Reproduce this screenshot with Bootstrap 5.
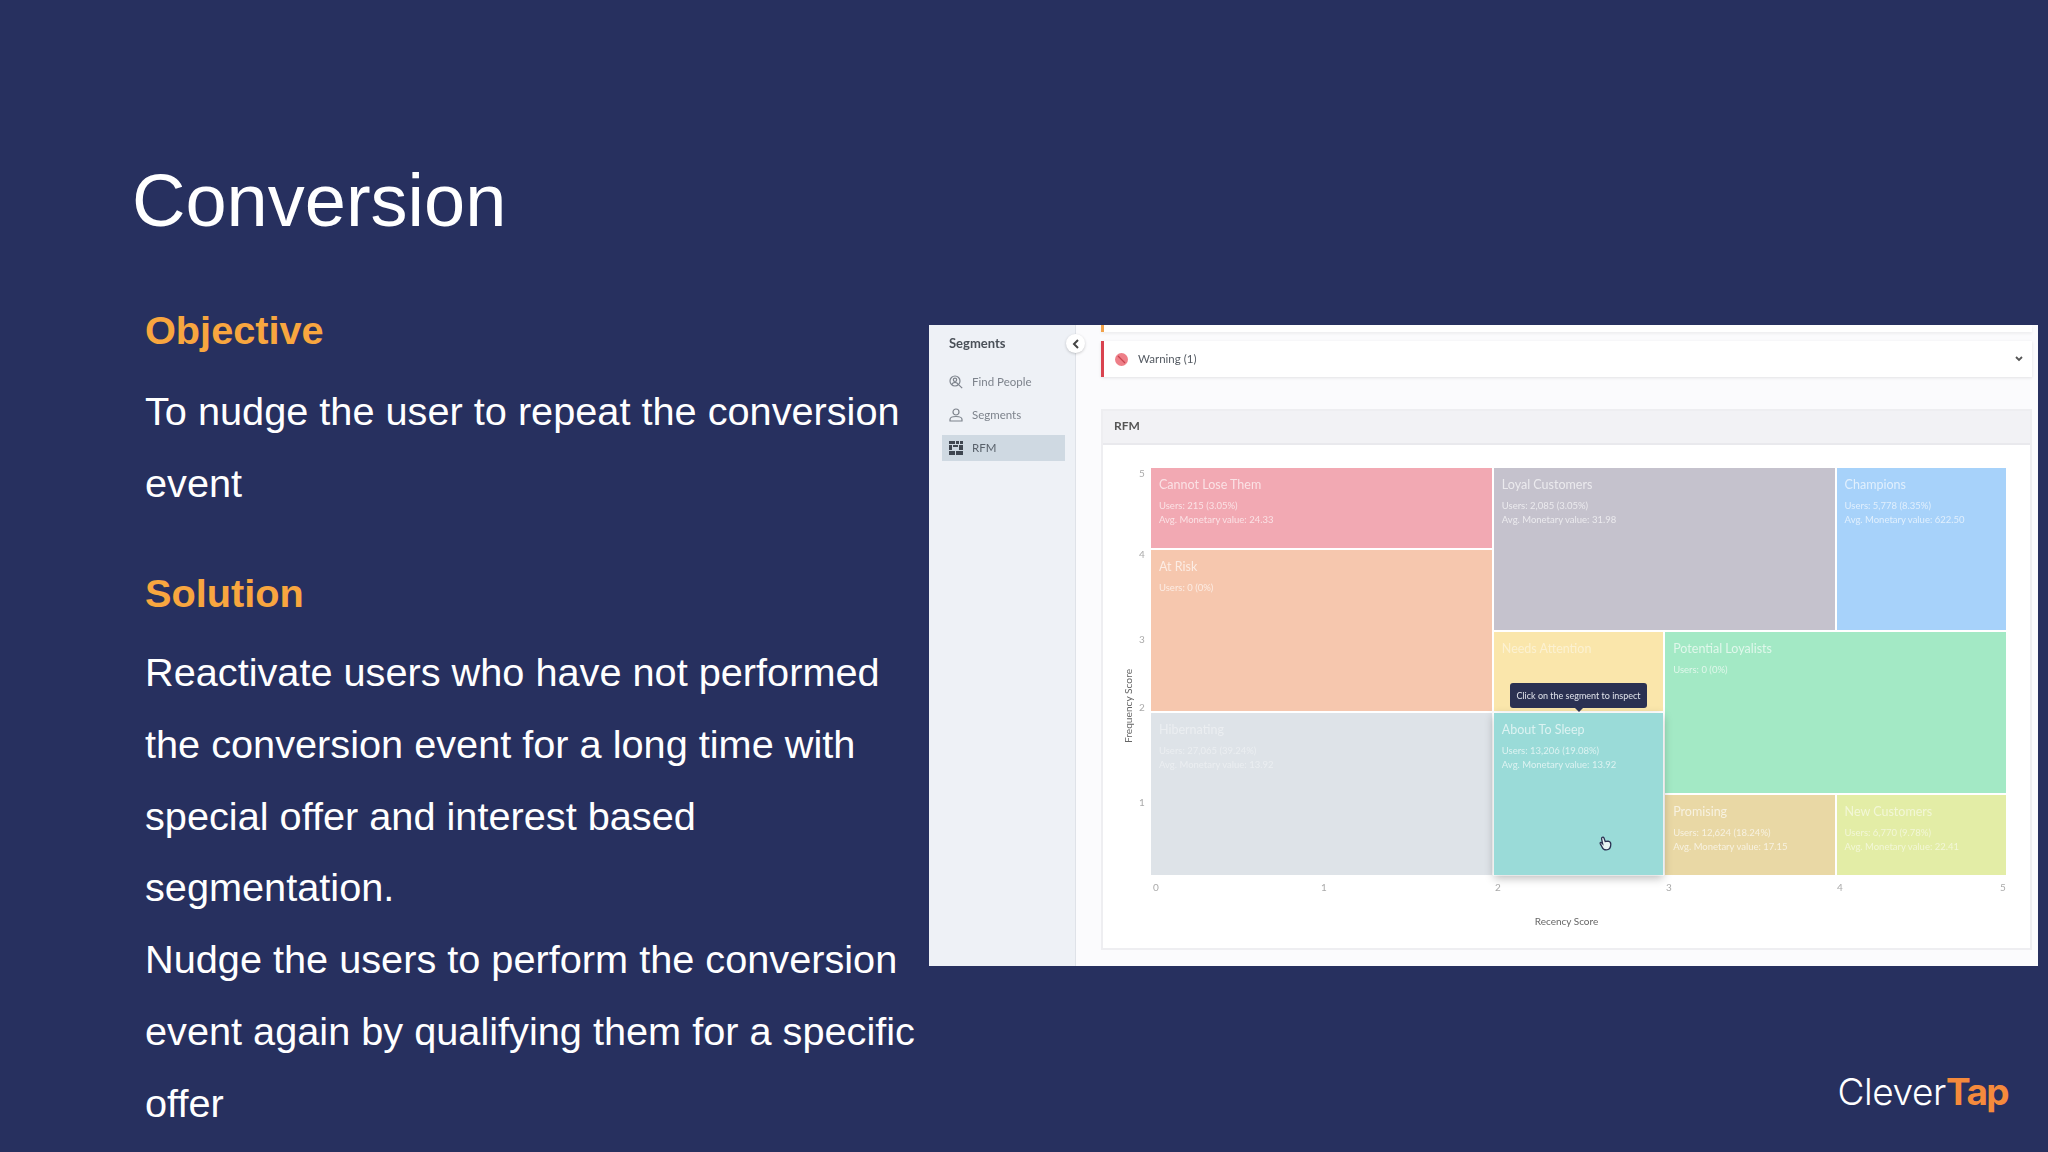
<!DOCTYPE html>
<html lang="en">
<head>
  <meta charset="UTF-8">
  <title>Conversion</title>
  <link href="https://cdn.jsdelivr.net/npm/bootstrap@5.3.0/dist/css/bootstrap.min.css" rel="stylesheet">
  <style>
    body { background-color: #27305f; color: #fff; font-family: "Liberation Sans", Arial, sans-serif; overflow: hidden; }
    .slide { height: 1152px; padding-left: 132px; padding-top: 156px; }
    .slide-title { font-family: "Liberation Sans", Arial, sans-serif; font-size: 74px; font-weight: 400; line-height: 89px; margin: 0 0 60px 0; }
    .copy { width: 797px; padding-left: 13px; flex: none; }
    .copy-head { font-family: "Liberation Sans", Arial, sans-serif; font-size: 39.7px; font-weight: 700; line-height: 50px; color: #f8a63f; margin: 0; }
    .copy-text { font-size: 39.7px; line-height: 71.8px; margin: 0; }
    .head-first { margin-bottom: 21px; }
    .head-second { margin-top: 48.5px; margin-bottom: 19px; }
    .shot-col { width: 1109px; margin-top: 20px; }

    /* the embedded product screenshot */
    .app-shot { height: 641px; background: #fbfbfd; font-family: Lato, "Open Sans", sans-serif; color: #555; filter: blur(.7px); }
    .app-side { width: 147px; flex: none; background: #eef1f6; border-right: 1px solid #dfe2e8; position: relative; padding: 11px 10px 0 13px; }
    .side-title { font-size: 13px; font-weight: 700; color: #4a5058; line-height: 14px; margin: 0 0 19px 7px; }
    .side-link { display: flex; align-items: center; gap: 9px; height: 26px; padding-left: 7px; margin-bottom: 7px; font-size: 11.5px; color: #7d838c; }
    .side-link svg { width: 14px; height: 14px; flex: none; }
    .side-on { background: #cfd9e2; color: #59616b; }
    .side-toggle { position: absolute; right: -10px; top: 9px; width: 19px; height: 19px; border-radius: 50%; background: #fff; box-shadow: 0 1px 3px rgba(0,0,0,.2); display: flex; align-items: center; justify-content: center; z-index: 2; }
    .app-main { flex: 1 1 auto; padding: 0 6px 16px 25px; }
    .top-strip { height: 7px; background: #fff; border-left: 3px solid #f2a24a; box-shadow: 0 2px 3px rgba(0,0,0,.05); }
    .warn-bar { height: 36px; margin-top: 9px; background: #fff; border-left: 3px solid #d9434f; box-shadow: 0 1px 3px rgba(0,0,0,.1); font-size: 11.5px; color: #555b63; padding: 0 9px 0 11px; }
    .warn-icon { width: 13px; height: 13px; margin-right: 10px; flex: none; }
    .rfm-card { height: 541px; margin-top: 32px; border: 2px solid #eeeef1; border-radius: 0; background: #fff; }
    .rfm-card .card-header { height: 34px; padding: 0 11px; line-height: 30px; font-size: 12px; font-weight: 700; color: #555; background: #f2f2f5; border-bottom: 2px solid #e9e9ed; border-radius: 0; }
    .rfm-card .card-body { padding: 23px 0 0 48px; position: relative; }

    .heat-map { width: 855px; height: 407px; display: grid; grid-template-columns: repeat(5, 1fr); grid-template-rows: repeat(5, 1fr); gap: 2px; position: relative; }
    .seg { padding: 10px 8px; color: rgba(255,255,255,.66); font-size: 9.5px; line-height: 14px; overflow: hidden; }
    .seg-name { display: block; font-size: 12.5px; line-height: 14px; margin-bottom: 7px; }
    .seg-lose { grid-area: 1 / 1 / 2 / 3; background: #f2a9b3; }
    .seg-risk { grid-area: 2 / 1 / 4 / 3; background: #f6c7ae; }
    .seg-loyal { grid-area: 1 / 3 / 3 / 5; background: #c5c2cd; }
    .seg-champ { grid-area: 1 / 5 / 3 / 6; background: #a7d2fa; }
    .seg-needs { grid-area: 3 / 3 / 4 / 4; background: #fae6ab; color: rgba(255,255,255,.45); }
    .seg-potential { grid-area: 3 / 4 / 5 / 6; background: #a3e9c5; }
    .seg-hiber { grid-area: 4 / 1 / 6 / 3; background: #dee3e8; color: rgba(255,255,255,.4); }
    .seg-sleep { grid-area: 4 / 3 / 6 / 4; background: #9adbd8; box-shadow: 0 3px 9px rgba(0,0,0,.28); z-index: 1; position: relative; outline: 1px solid rgba(255,255,255,.5); }
    .seg-promise { grid-area: 5 / 4 / 6 / 5; background: #e9d8a5; }
    .seg-new { grid-area: 5 / 5 / 6 / 6; background: #e3eda6; color: rgba(255,255,255,.55); }

    .seg-tip { position: absolute; left: 359px; top: 215px; width: 137px; height: 25px; background: #2b3152; color: #dfe2ea; border-radius: 3px; font-size: 9px; line-height: 25px; text-align: center; white-space: nowrap; z-index: 3; }
    .seg-tip::after { content: ""; position: absolute; left: 50%; bottom: -4px; margin-left: -4px; border: 4px solid transparent; border-bottom: 0; border-top-color: #2b3152; }
    .hand-cursor { position: absolute; left: 447px; top: 368px; width: 14px; height: 16px; z-index: 3; }

    .axis-y { position: absolute; left: 36px; top: 23px; height: 407px; width: 10px; display: grid; grid-template-rows: repeat(5, 1fr); font-size: 10px; line-height: 10px; color: #aaa; }
    .axis-y span:nth-child(3) { margin-top: 3px; }
    .axis-y span:nth-child(4) { margin-top: -10px; }
    .axis-y span:nth-child(5) { margin-top: 3px; }
    .axis-title-y { position: absolute; left: -1px; top: 255px; width: 80px; margin-left: -14px; text-align: center; transform: rotate(-90deg); font-size: 10.2px; line-height: 12px; color: #666; white-space: nowrap; }
    .axis-x { width: 855px; display: grid; grid-template-columns: repeat(5, 1fr) 0; font-size: 10px; line-height: 12px; color: #aaa; padding-top: 6px; }
    .axis-x span { padding-left: 2px; }
    .axis-x span:nth-child(2) { margin-left: -3px; }
    .axis-x span:last-child { margin-left: -8px; }
    .axis-title-x { width: 831px; text-align: center; margin-top: 22px; font-size: 10px; line-height: 12px; color: #666; }

    .brand-row { width: 1079px; margin-top: 104px; text-align: right; font-family: Inter, "Liberation Sans", sans-serif; font-size: 37px; line-height: 44px; }
    .brand-clever { font-weight: 300; color: #fff; letter-spacing: -.4px; }
    .brand-tap { font-weight: 700; color: #f58a3c; letter-spacing: -1.6px; }
  </style>
</head>
<body>
  <div class="slide">
    <h1 class="slide-title">Conversion</h1>
    <div class="d-flex">
      <div class="copy">
        <h2 class="copy-head head-first">Objective</h2>
        <p class="copy-text">To nudge the user to repeat the conversion event</p>
        <h2 class="copy-head head-second">Solution</h2>
        <p class="copy-text">Reactivate users who have not performed the conversion event for a long time with special offer and interest based segmentation.</p>
        <p class="copy-text">Nudge the users to perform the conversion event again by qualifying them for a specific offer</p>
      </div>

      <div class="shot-col">
        <div class="app-shot d-flex">
          <div class="app-side">
            <p class="side-title">Segments</p>
            <div class="side-link">
              <svg viewBox="0 0 14 14" fill="none" stroke="#7d838c" stroke-width="1.2"><circle cx="6" cy="6" r="5"/><circle cx="6" cy="4.8" r="1.7"/><path d="M2.8 9.5c.6-1.6 1.8-2.2 3.2-2.2s2.6.6 3.2 2.2M9.8 9.8l3.4 3.4"/></svg>
              Find People
            </div>
            <div class="side-link">
              <svg viewBox="0 0 14 14" fill="none" stroke="#7d838c" stroke-width="1.2"><circle cx="7" cy="4" r="3"/><path d="M1 13v-1.5C1 9.5 3 8.5 7 8.5s6 1 6 3V13z"/></svg>
              Segments
            </div>
            <div class="side-link side-on">
              <svg viewBox="0 0 14 14" fill="#3f4650"><rect x="0" y="0" width="6" height="3"/><rect x="7" y="0" width="3" height="3"/><rect x="11" y="0" width="3" height="3"/><rect x="0" y="4" width="3" height="5"/><rect x="4" y="4" width="5" height="2"/><rect x="10" y="4" width="4" height="5"/><rect x="0" y="10" width="6" height="4"/><rect x="7" y="10" width="7" height="4"/></svg>
              RFM
            </div>
            <div class="side-toggle">
              <svg width="8" height="10" viewBox="0 0 8 10" fill="none" stroke="#444" stroke-width="2"><path d="M6 1L2 5l4 4"/></svg>
            </div>
          </div>

          <div class="app-main">
            <div class="top-strip"></div>
            <div class="warn-bar d-flex align-items-center">
              <svg class="warn-icon" viewBox="0 0 13 13"><circle cx="6.5" cy="6.5" r="6.5" fill="#ee7f88"/><path d="M3 3l7 7" stroke="#c9434f" stroke-width="1.2"/></svg>
              <span>Warning (1)</span>
              <svg class="ms-auto" width="8" height="6" viewBox="0 0 8 6" fill="none" stroke="#555" stroke-width="1.8"><path d="M1 1l3 3 3-3"/></svg>
            </div>

            <div class="card rfm-card">
              <div class="card-header">RFM</div>
              <div class="card-body">
                <div class="axis-y"><span>5</span><span>4</span><span>3</span><span>2</span><span>1</span></div>
                <div class="axis-title-y">Frequency Score</div>
                <div class="heat-map">
                  <div class="seg seg-lose"><span class="seg-name">Cannot Lose Them</span>Users: 215 (3.05%)<br>Avg. Monetary value: 24.33</div>
                  <div class="seg seg-risk"><span class="seg-name">At Risk</span>Users: 0 (0%)</div>
                  <div class="seg seg-loyal"><span class="seg-name">Loyal Customers</span>Users: 2,085 (3.05%)<br>Avg. Monetary value: 31.98</div>
                  <div class="seg seg-champ"><span class="seg-name">Champions</span>Users: 5,778 (8.35%)<br>Avg. Monetary value: 622.50</div>
                  <div class="seg seg-needs"><span class="seg-name">Needs Attention</span></div>
                  <div class="seg seg-potential"><span class="seg-name">Potential Loyalists</span>Users: 0 (0%)</div>
                  <div class="seg seg-hiber"><span class="seg-name">Hibernating</span>Users: 27,065 (39.24%)<br>Avg. Monetary value: 13.92</div>
                  <div class="seg seg-sleep"><span class="seg-name">About To Sleep</span>Users: 13,206 (19.08%)<br>Avg. Monetary value: 13.92</div>
                  <div class="seg seg-promise"><span class="seg-name">Promising</span>Users: 12,624 (18.24%)<br>Avg. Monetary value: 17.15</div>
                  <div class="seg seg-new"><span class="seg-name">New Customers</span>Users: 6,770 (9.78%)<br>Avg. Monetary value: 22.41</div>
                  <div class="seg-tip">Click on the segment to inspect</div>
                  <svg class="hand-cursor" viewBox="0 0 14 16"><path d="M4 1.5c.8-.8 1.6-.4 2 .6l1.2 3.4 3-.4c1.6.2 2.6 1.4 2.6 3.2 0 3-1.6 5.6-4.6 5.6-2.2 0-3.4-1-4.2-3L2.2 7.6c-.4-.9.6-1.6 1.4-.8l1 1L3.6 3c-.1-.6 0-1.1.4-1.5z" fill="#e8f4f4" stroke="#2b3152" stroke-width="1.3"/></svg>
                </div>
                <div class="axis-x"><span>0</span><span>1</span><span>2</span><span>3</span><span>4</span><span>5</span></div>
                <div class="axis-title-x">Recency Score</div>
              </div>
            </div>
          </div>
        </div>

        <div class="brand-row"><span class="brand-clever">Clever</span><span class="brand-tap">Tap</span></div>
      </div>
    </div>
  </div>
  <script src="https://cdn.jsdelivr.net/npm/bootstrap@5.3.0/dist/js/bootstrap.bundle.min.js"></script>
</body>
</html>
